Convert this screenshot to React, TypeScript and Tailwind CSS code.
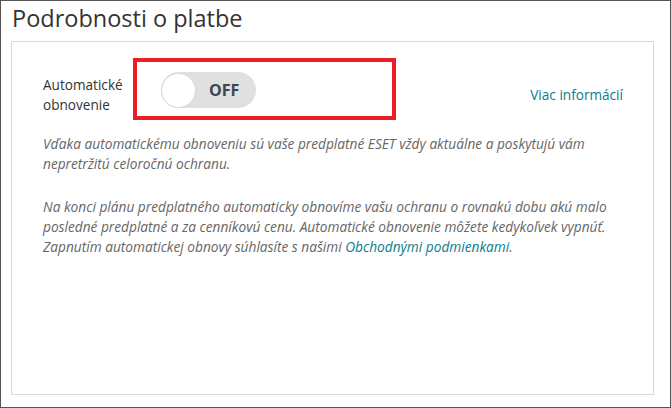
export default function App() {
  const font = { fontFamily: '"Open Sans", "Noto Sans", sans-serif' };
  return (
    <div className="w-[671px] h-[408px] bg-white border border-[#555] box-border relative" style={font}>
      <div className="h-[40px] pl-[11px] pt-[1px] text-[23.5px] leading-[32px] text-[#333]">Podrobnosti o platbe</div>
      <div className="ml-[10px] w-[643px] h-[354px] border border-[#d9d9d9] box-border pt-[30px] pl-[31px] pr-[30px]">
        <div className="relative flex items-start h-[43px]">
          <div className="w-[118px] mt-[3px] text-[13.6px] leading-[20px] text-[#333]">
            Automatické<br />obnovenie
          </div>
          <div className="relative w-[95px] h-[36px] rounded-full bg-[#e0e0e0] flex items-center">
            <div className="absolute left-0 top-[0.5px] w-[35px] h-[35px] rounded-full bg-white border border-[#d8d8d8]" />
            <span className="ml-[48px] text-[16px] font-bold text-[#3c4650] leading-none">OFF</span>
          </div>
          <div className="flex-1" />
          <a className="mt-[13px] text-[13.6px] leading-[20px] text-[#0a7d8c]">Viac informácií</a>
          <div className="absolute left-[90px] top-[-14px] w-[263px] h-[62px] border-4 border-[#ee1c25]" />
        </div>
        <p className="mt-[19px] text-[13.7px] leading-[20px] italic text-[#666]">
          Vďaka automatickému obnoveniu sú vaše predplatné ESET vždy aktuálne a poskytujú vám nepretržitú celoročnú ochranu.
        </p>
        <p className="mt-[23px] text-[13.7px] leading-[20px] italic text-[#666]">
          Na konci plánu predplatného automaticky obnovíme vašu ochranu o rovnakú dobu akú malo posledné predplatné a za cenníkovú cenu. Automatické obnovenie môžete kedykoľvek vypnúť. Zapnutím automatickej obnovy súhlasíte s našimi <span className="text-[#0a7d8c]">Obchodnými podmienkami</span>.
        </p>
      </div>
    </div>
  );
}
